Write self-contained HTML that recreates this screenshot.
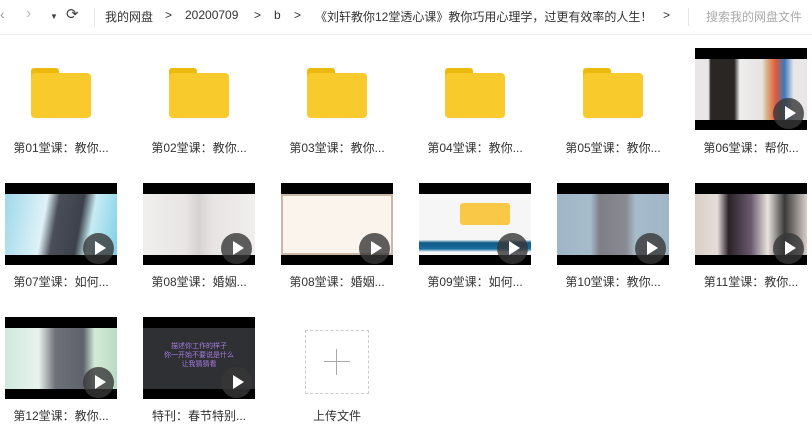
<!DOCTYPE html>
<html><head><meta charset="utf-8"><style>
*{margin:0;padding:0;box-sizing:border-box}
body{width:812px;height:424px;background:#fff;position:relative;overflow:hidden;font-family:"Liberation Sans","Noto Sans CJK SC",sans-serif;color:#333}
.a{position:absolute}
.top{font-size:12px;color:#333;top:8px;white-space:nowrap}
.lbl{position:absolute;width:112px;text-align:center;font-size:12px;color:#333;white-space:nowrap}
.fold{position:absolute;width:60px;height:52px}
.th{position:absolute;width:112px;height:82px;background:#000;overflow:hidden}
.th .in{position:absolute;left:0;top:11px;width:112px;height:61px}
.play{position:absolute;right:3px;bottom:1px;width:31px;height:31px;border-radius:50%;background:rgba(55,55,55,.8)}
.play:after{content:"";position:absolute;left:12px;top:8px;border-left:11px solid #fff;border-top:7.5px solid transparent;border-bottom:7.5px solid transparent}
</style></head><body>
<div class="a" style="left:0;top:0;width:812px;height:35px;border-bottom:1px solid #eef0f4"></div>
<div class="a top" style="left:0;color:#999;font-size:14px;top:6px">&lsaquo;</div>
<div class="a top" style="left:26px;color:#bbb;font-size:16px;top:5px">&rsaquo;</div>
<div class="a top" style="left:50px;font-size:8px;top:12px;color:#444">▼</div>
<div class="a top" style="left:66px;font-size:15px;top:5px;color:#444">⟳</div>
<div class="a" style="left:94px;top:8px;width:1px;height:18px;background:#e5e5e5"></div>
<div class="a top" style="left:105px">我的网盘</div>
<div class="a top" style="left:165px">&gt;</div>
<div class="a top" style="left:185px">20200709</div>
<div class="a top" style="left:254px">&gt;</div>
<div class="a top" style="left:274px">b</div>
<div class="a top" style="left:294px">&gt;</div>
<div class="a top" style="left:315px">《刘轩教你12堂透心课》教你巧用心理学，过更有效率的人生！</div>
<div class="a top" style="left:663px">&gt;</div>
<div class="a" style="left:688px;top:8px;width:1px;height:18px;background:#e5e5e5"></div>
<div class="a top" style="left:706px;color:#aaa">搜索我的网盘文件</div>

<svg class="fold" style="left:31px;top:66px" viewBox="0 0 60 52"><rect x="0" y="2" width="28" height="12" rx="3" fill="#ecba0c"/><rect x="0" y="7" width="60" height="45" rx="4" fill="#f9ca2b"/></svg>
<svg class="fold" style="left:169px;top:66px" viewBox="0 0 60 52"><rect x="0" y="2" width="28" height="12" rx="3" fill="#ecba0c"/><rect x="0" y="7" width="60" height="45" rx="4" fill="#f9ca2b"/></svg>
<svg class="fold" style="left:307px;top:66px" viewBox="0 0 60 52"><rect x="0" y="2" width="28" height="12" rx="3" fill="#ecba0c"/><rect x="0" y="7" width="60" height="45" rx="4" fill="#f9ca2b"/></svg>
<svg class="fold" style="left:445px;top:66px" viewBox="0 0 60 52"><rect x="0" y="2" width="28" height="12" rx="3" fill="#ecba0c"/><rect x="0" y="7" width="60" height="45" rx="4" fill="#f9ca2b"/></svg>
<svg class="fold" style="left:583px;top:66px" viewBox="0 0 60 52"><rect x="0" y="2" width="28" height="12" rx="3" fill="#ecba0c"/><rect x="0" y="7" width="60" height="45" rx="4" fill="#f9ca2b"/></svg>

<div class="th" style="left:695px;top:48px"><div class="in" style="background:linear-gradient(90deg,#e8e6e6 0%,#e8e6e6 12%,#2a2624 14%,#2a2624 35%,#eee 40%,#e5e2e0 60%,#d9b48a 64%,#e05a3a 72%,#3a7ac0 80%,#e8e6e6 88%)"></div><div class="play"></div></div>

<div class="th" style="left:5px;top:183px"><div class="in" style="background:linear-gradient(100deg,#9fd8ea 0%,#dff2f8 35%,#4a4e58 45%,#3d414a 65%,#c8ecf4 75%,#7fd0e6 100%)"></div><div class="play"></div></div>
<div class="th" style="left:143px;top:183px"><div class="in" style="background:linear-gradient(90deg,#f1eeee 0%,#e8e4e4 38%,#d6d2d0 50%,#e8e4e4 62%,#f1eeee 100%)"></div><div class="play"></div></div>
<div class="th" style="left:281px;top:183px"><div class="in" style="background:#faf4ec;border:2px solid #c9b8a6"></div><div class="play"></div></div>
<div class="th" style="left:419px;top:183px"><div class="in" style="background:linear-gradient(180deg,#f6f6f6 0%,#f6f6f6 75%,#0f5a8a 80%,#1b6d9e 90%,#f6f6f6 95%)"><div class="a" style="left:41px;top:9px;width:50px;height:22px;background:#f9c846;border-radius:3px"></div></div><div class="play"></div></div>
<div class="th" style="left:557px;top:183px"><div class="in" style="background:linear-gradient(90deg,#9fb6c7 0%,#a7bccb 30%,#7e7f86 38%,#8a8b92 62%,#a7bccb 70%,#9fb6c7 100%)"></div><div class="play"></div></div>
<div class="th" style="left:695px;top:183px"><div class="in" style="background:linear-gradient(90deg,#d9cfc8 0%,#e5ddd8 20%,#2a2226 30%,#6a5a70 50%,#e9e3de 65%,#3a3a3a 80%,#d9cfc8 100%)"></div><div class="play"></div></div>

<div class="th" style="left:5px;top:317px"><div class="in" style="background:linear-gradient(90deg,#cfe8dc 0%,#e9f3ee 30%,#6d7078 45%,#5f636b 70%,#d5ead8 80%,#b9dcc4 100%)"></div><div class="play"></div></div>
<div class="th" style="left:143px;top:317px"><div class="in" style="background:#2e3034"><div class="a" style="left:16px;top:14px;width:80px;height:28px;color:#a77be0;font-size:7px;text-align:center;line-height:9px">描述你工作的样子<br>你一开始不要说是什么<br>让我猜猜看</div></div><div class="play"></div></div>

<div class="a" style="left:305px;top:330px;width:64px;height:64px;border:1px dashed #ccc"></div>
<div class="a" style="left:324px;top:361px;width:26px;height:1px;background:#aaa"></div>
<div class="a" style="left:336px;top:349px;width:1px;height:26px;background:#aaa"></div>

<div class="lbl" style="left:5px;top:139px">第01堂课：教你...</div>
<div class="lbl" style="left:143px;top:139px">第02堂课：教你...</div>
<div class="lbl" style="left:281px;top:139px">第03堂课：教你...</div>
<div class="lbl" style="left:419px;top:139px">第04堂课：教你...</div>
<div class="lbl" style="left:557px;top:139px">第05堂课：教你...</div>
<div class="lbl" style="left:695px;top:139px">第06堂课：帮你...</div>
<div class="lbl" style="left:5px;top:273px">第07堂课：如何...</div>
<div class="lbl" style="left:143px;top:273px">第08堂课：婚姻...</div>
<div class="lbl" style="left:281px;top:273px">第08堂课：婚姻...</div>
<div class="lbl" style="left:419px;top:273px">第09堂课：如何...</div>
<div class="lbl" style="left:557px;top:273px">第10堂课：教你...</div>
<div class="lbl" style="left:695px;top:273px">第11堂课：教你...</div>
<div class="lbl" style="left:5px;top:407px">第12堂课：教你...</div>
<div class="lbl" style="left:143px;top:407px">特刊：春节特别...</div>
<div class="lbl" style="left:281px;top:407px">上传文件</div>
</body></html>
